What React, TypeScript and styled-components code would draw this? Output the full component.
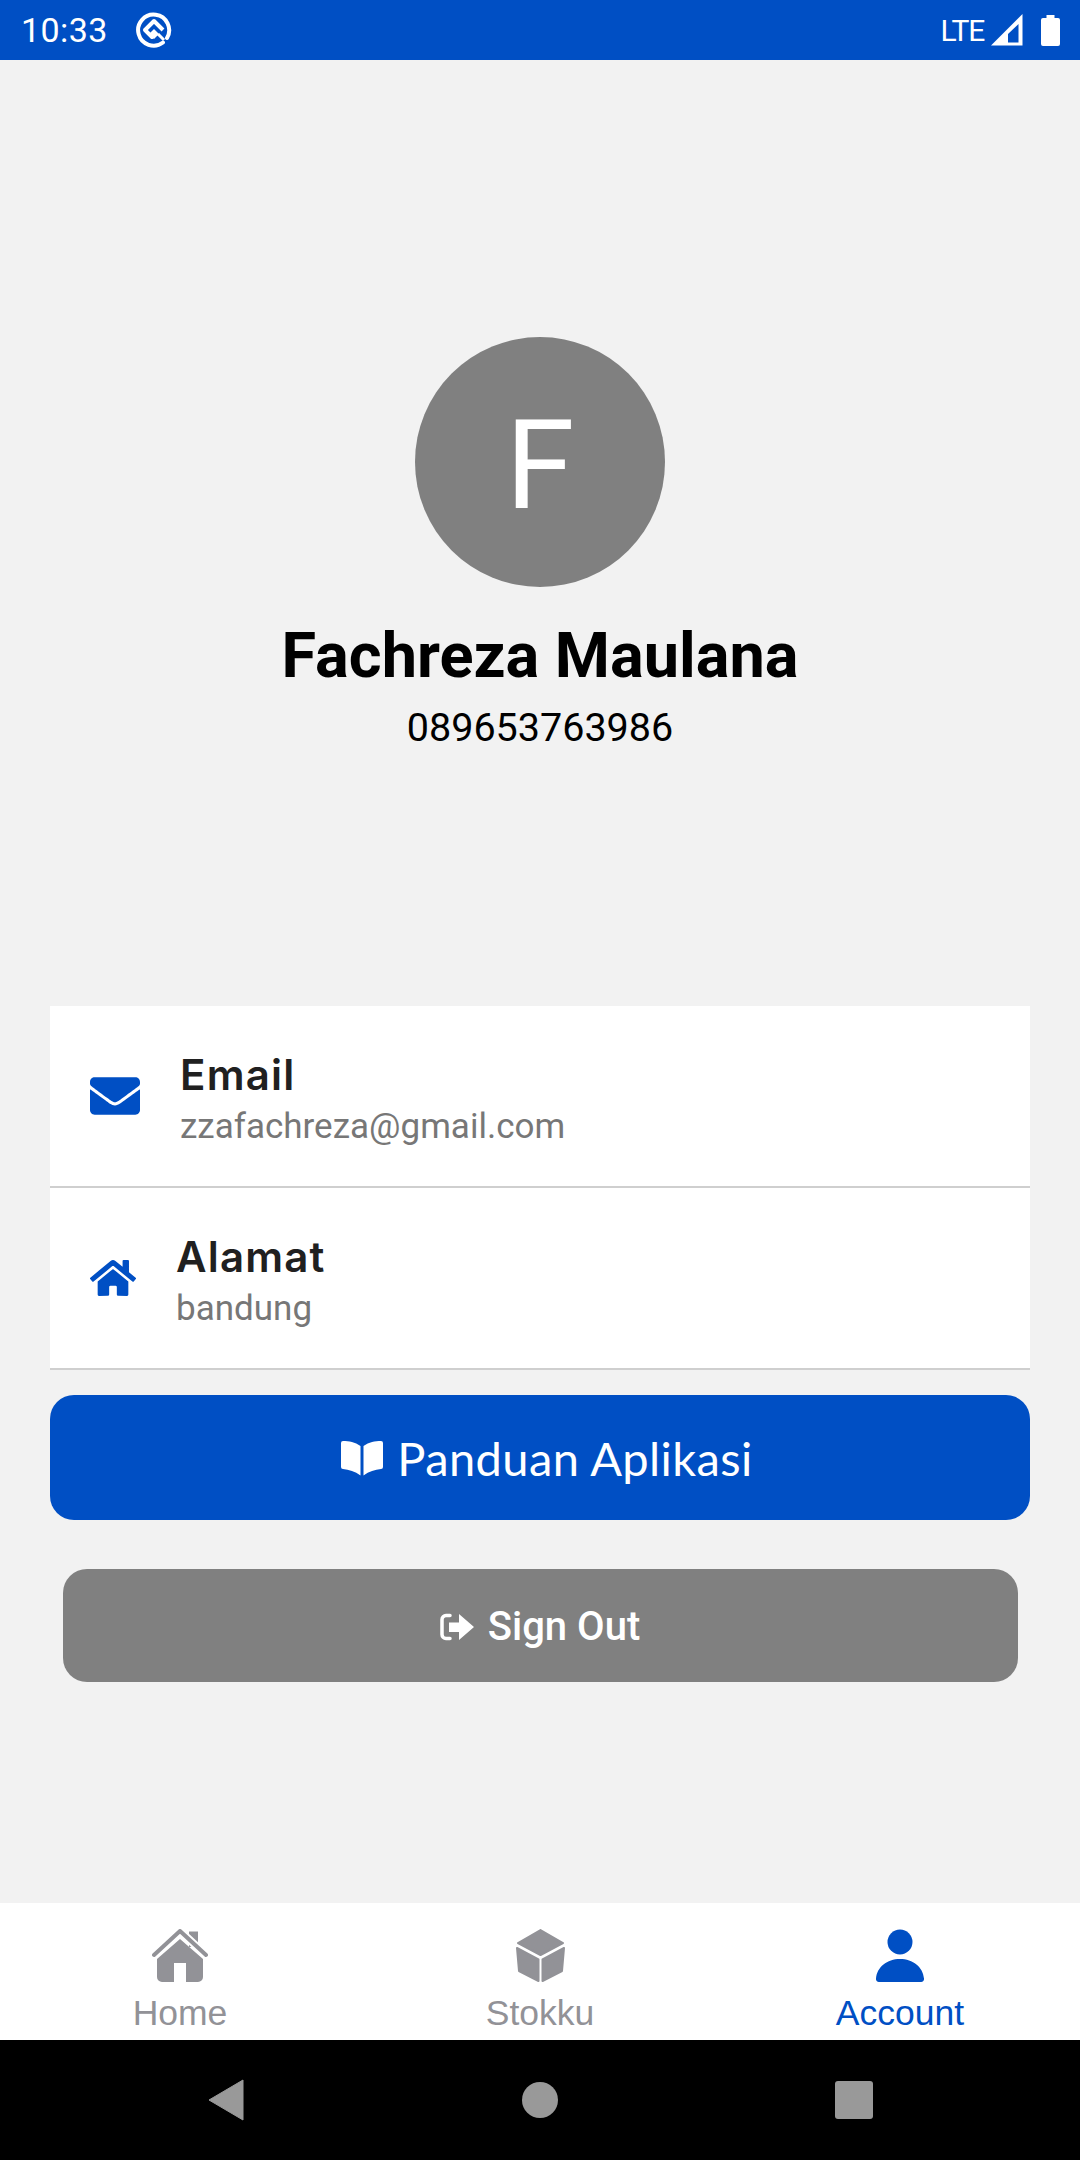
import styled, { createGlobalStyle } from "styled-components";
import { FaEnvelope, FaHome } from "react-icons/fa";

const BLUE = "#004fc4";

const GlobalStyle = createGlobalStyle`
  html, body {
    margin: 0;
    padding: 0;
    background: #f2f2f2;
  }
  * {
    box-sizing: border-box;
  }
`;

const Page = styled.div`
  display: flex;
  flex-direction: column;
  width: 1080px;
  height: 2160px;
  font-family: Roboto, "Liberation Sans", sans-serif;
  overflow: hidden;
`;

const StatusBar = styled.header`
  display: flex;
  align-items: center;
  justify-content: space-between;
  height: 60px;
  padding: 0 20px 0 21px;
  background: ${BLUE};
  color: #fff;
`;
const StatusGroup = styled.div`
  display: flex;
  align-items: center;
`;
const Clock = styled.span`
  font-size: 34px;
  margin-right: 28px;
  letter-spacing: 0.4px;
`;
const Lte = styled.span`
  font-size: 30px;
  margin-right: 7px;
  letter-spacing: -1.2px;
`;
const SignalIcon = styled.svg`
  margin-right: 18px;
`;

const Content = styled.main`
  flex: 1;
  display: flex;
  flex-direction: column;
  align-items: center;
  padding: 277px 50px 0;
`;
const Avatar = styled.div`
  display: flex;
  align-items: center;
  justify-content: center;
  width: 250px;
  height: 250px;
  padding-top: 6px;
  border-radius: 50%;
  background: #808080;
  color: #fff;
  font-size: 125px;
  font-weight: 400;
`;
const Name = styled.h1`
  margin: 30px 0 0;
  font-size: 63px;
  line-height: 78px;
  font-weight: 700;
  color: #000;
`;
const Phone = styled.p`
  margin: 6px 0 0;
  font-size: 39.5px;
  line-height: 54px;
  color: #000;
`;
const InfoCard = styled.section`
  width: 100%;
  margin-top: 251px;
  background: #fff;
`;
const InfoRow = styled.div`
  display: flex;
  align-items: center;
  gap: 40px;
  height: 182px;
  padding: 0 0 0 40px;
  border-bottom: 2px solid #cfcfcf;
`;
const InfoText = styled.div`
  display: flex;
  flex-direction: column;
  padding-top: 7px;
`;
const InfoTitle = styled.span`
  font-family: Inter, "Noto Sans", sans-serif;
  font-size: 42px;
  line-height: 54px;
  font-weight: 600;
  letter-spacing: 1.2px;
  color: #202020;
`;
const InfoValue = styled.span`
  font-size: 35px;
  line-height: 50px;
  font-weight: 400;
  color: #777;
`;
const GuideButton = styled.button`
  display: flex;
  align-items: center;
  justify-content: center;
  gap: 14px;
  width: 100%;
  height: 125px;
  margin-top: 25px;
  padding: 0 0 0 14px;
  border: 0;
  border-radius: 24px;
  background: ${BLUE};
  color: #fff;
  font-family: Lato, "Noto Sans", sans-serif;
  font-size: 47px;
  letter-spacing: 0.4px;
`;
const SignOutButton = styled.button`
  display: flex;
  align-items: center;
  justify-content: center;
  gap: 14px;
  width: 955px;
  height: 113px;
  margin-top: 49px;
  padding: 2px 0 0;
  border: 0;
  border-radius: 24px;
  background: #808080;
  color: #fff;
  font-family: Roboto, sans-serif;
  font-size: 40px;
  font-weight: 500;
`;

const TabBar = styled.nav`
  display: grid;
  grid-template-columns: repeat(3, 1fr);
  height: 137px;
  background: #fff;
`;
const Tab = styled.div<{ $active?: boolean }>`
  display: flex;
  flex-direction: column;
  align-items: center;
  padding-top: 26px;
  color: ${(p) => (p.$active ? BLUE : "#929297")};
  font-size: 35.5px;
`;
const TabLabel = styled.span`
  margin-top: 8px;
  line-height: 46px;
  font-family: "Liberation Sans", sans-serif;
`;

const NavBar = styled.footer`
  display: grid;
  grid-template-columns: repeat(3, 314px);
  justify-items: center;
  align-items: center;
  height: 120px;
  padding-left: 69px;
  background: #000;
`;
const NavCircle = styled.div`
  width: 36px;
  height: 36px;
  border-radius: 50%;
  background: #999;
`;
const NavSquare = styled.div`
  width: 38px;
  height: 38px;
  border-radius: 3px;
  background: #999;
`;

export default function App() {
  return (
    <Page>
      <GlobalStyle />
      <StatusBar>
        <StatusGroup>
          <Clock>10:33</Clock>
          <svg width="36" height="36" viewBox="0 0 36 36" fill="none">
            <path d="M27 30.5A15.5 15.5 0 1 1 31 26" stroke="#fff" strokeWidth="4" strokeLinecap="round" />
            <path d="M9 18L18 9L27 18" stroke="#fff" strokeWidth="4" strokeLinejoin="round" />
            <path d="M9 18L16 25" stroke="#fff" strokeWidth="4" strokeLinecap="round" />
            <path d="M18 17L23 22L18 27L13 22Z" fill="#fff" />
            <path d="M22 22L28 28" stroke="#fff" strokeWidth="3" />
          </svg>
        </StatusGroup>
        <StatusGroup>
          <Lte>LTE</Lte>
          <SignalIcon width="32" height="32" viewBox="0 0 32 32">
            <path d="M0 31.5L31.5 0V31.5Z" fill="#fff" />
            <path d="M17 20L27.5 10V28.5H17Z" fill={BLUE} />
          </SignalIcon>
          <svg width="19" height="31" viewBox="0 0 19 31">
            <path d="M5.5 0H13.5V3H17A2 2 0 0 1 19 5V29A2 2 0 0 1 17 31H2A2 2 0 0 1 0 29V5A2 2 0 0 1 2 3H5.5Z" fill="#fff" />
          </svg>
        </StatusGroup>
      </StatusBar>

      <Content>
        <Avatar>F</Avatar>
        <Name>Fachreza Maulana</Name>
        <Phone>089653763986</Phone>
        <InfoCard>
          <InfoRow>
            <FaEnvelope size={50} color={BLUE} />
            <InfoText>
              <InfoTitle>Email</InfoTitle>
              <InfoValue>zzafachreza@gmail.com</InfoValue>
            </InfoText>
          </InfoRow>
          <InfoRow>
            <FaHome size={46} color={BLUE} />
            <InfoText>
              <InfoTitle>Alamat</InfoTitle>
              <InfoValue>bandung</InfoValue>
            </InfoText>
          </InfoRow>
        </InfoCard>
        <GuideButton>
          <svg width="42" height="36" viewBox="0 0 42 36" fill="currentColor">
            <path d="M2 1C8 1 14 2 19.5 6V35.5C14 31.5 8 29.5 2 29A2 2 0 0 1 0 27V3A2 2 0 0 1 2 1Z" />
            <path d="M40 1C34 1 28 2 22.5 6V35.5C28 31.5 34 29.5 40 29A2 2 0 0 0 42 27V3A2 2 0 0 0 40 1Z" />
          </svg>
          Panduan Aplikasi
        </GuideButton>
        <SignOutButton>
          <svg width="34" height="28" viewBox="0 0 34 28">
            <path d="M10 2.5H6A4 4 0 0 0 2 6.5V21.5A4 4 0 0 0 6 25.5H10" fill="none" stroke="#fff" strokeWidth="3.5" strokeLinecap="round" />
            <path d="M9 9.5H19V1L34 14L19 27V19H9Z" fill="#fff" />
          </svg>
          Sign Out
        </SignOutButton>
      </Content>

      <TabBar>
        <Tab>
          <svg width="56" height="53" viewBox="0 0 56 53" fill="currentColor">
            <path d="M37 2.5H46V18H37Z" />
            <path d="M2 26L28 2L54 26" fill="none" stroke="#fff" strokeWidth="8" />
            <path d="M2 26L28 2L54 26" fill="none" stroke="currentColor" strokeWidth="4" strokeLinecap="round" strokeLinejoin="round" />
            <path d="M28 10L51 30V48A5 5 0 0 1 46 53H34V34H22V53H10A5 5 0 0 1 5 48V30Z" />
          </svg>
          <TabLabel>Home</TabLabel>
        </Tab>
        <Tab>
          <svg width="49" height="53" viewBox="0 0 49 53" fill="currentColor" stroke="currentColor" strokeWidth="2" strokeLinejoin="round">
            <path d="M24.5 1L47 14L24.5 26L2 14Z" />
            <path d="M1 19L22.5 30.5V52L3 42Z" />
            <path d="M48 19L26.5 30.5V52L46 42Z" />
          </svg>
          <TabLabel>Stokku</TabLabel>
        </Tab>
        <Tab $active>
          <svg width="48" height="53" viewBox="0 0 48 53" fill="currentColor">
            <circle cx="24" cy="13" r="12.5" />
            <path d="M3 53A3 3 0 0 1 0 49.5C1 38 11 30 24 30S47 38 48 49.5A3 3 0 0 1 45 53Z" />
          </svg>
          <TabLabel>Account</TabLabel>
        </Tab>
      </TabBar>

      <NavBar>
        <svg width="38" height="42" viewBox="0 0 38 42">
          <path d="M36 1V41L2 21Z" fill="#999" stroke="#999" strokeLinejoin="round" />
        </svg>
        <NavCircle />
        <NavSquare />
      </NavBar>
    </Page>
  );
}
